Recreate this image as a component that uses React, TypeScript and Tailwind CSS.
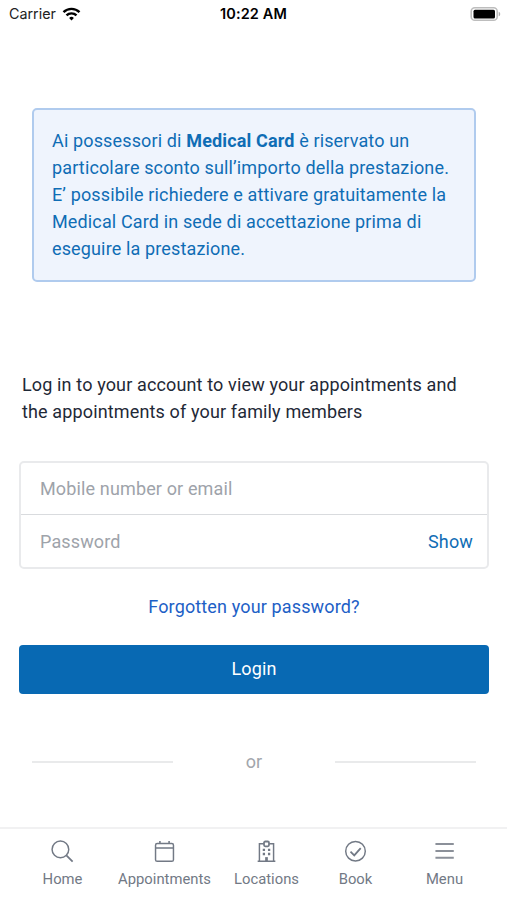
import React from 'react';

interface NavItem {
  label: string;
  width: string;
  icon: React.ReactNode;
}

const navItems: NavItem[] = [
  {
    label: 'Home',
    width: 'w-[89px]',
    icon: (
      <>
        <circle cx="10" cy="10" r="8" />
        <path d="M15.7 15.7l6 6" strokeWidth="1.7" />
      </>
    ),
  },
  {
    label: 'Appointments',
    width: 'w-[115px]',
    icon: (
      <>
        <rect x="3.4" y="4.4" width="17.2" height="17" rx="1.6" />
        <path d="M3.4 8.7h17.2M7.6 2v2.2M16.4 2v2.2" strokeWidth="1.5" />
      </>
    ),
  },
  {
    label: 'Locations',
    width: 'w-[89px]',
    icon: (
      <>
        <path d="M3.5 21.3h17M5.2 21.3V4.6h4.2M14.6 4.6h4.2v16.7" />
        <rect x="9.6" y="2.4" width="4.8" height="4.6" rx="1.2" strokeWidth="1.7" />
        <path d="M12 17.4v3.9" strokeWidth="2.6" />
        <path d="M8.4 10.4h2.2M13.4 10.4h2.2M8.4 14.4h2.2M13.4 14.4h2.2" strokeWidth="2.2" />
      </>
    ),
  },
  {
    label: 'Book',
    width: 'w-[89px]',
    icon: (
      <>
        <circle cx="12" cy="11.7" r="9.4" />
        <path d="M7.2 12.2l3.6 3.5 6.2-7" strokeWidth="1.7" />
      </>
    ),
  },
  {
    label: 'Menu',
    width: 'w-[89px]',
    icon: <path d="M3.3 4.8h17.6M3.3 11.5h17.6M3.3 17.9h17.6" stroke="#8b9099" strokeWidth="1.9" />,
  },
];

const StatusBar = () => (
  <header className="grid h-[27px] shrink-0 grid-cols-3 items-center px-[8px] pb-px font-['Inter',sans-serif] text-[14px] text-black">
    <div className="flex items-center gap-[6px] pl-px">
      <span className="text-[14.3px] text-[#222222]">Carrier</span>
      <svg width="19" height="14" viewBox="0 0 18 14" fill="none" stroke="black" strokeWidth="2.4">
        <path d="M1 5.1a11.5 11.5 0 0 1 16 0" />
        <path d="M4 8.4a7.1 7.1 0 0 1 10 0" />
        <path d="M6.6 10.9a3.5 3.5 0 0 1 4.8 0L9 13.4z" fill="black" stroke="none" />
      </svg>
    </div>
    <span className="text-center text-[14.5px] font-semibold tracking-[0.1px]">10:22 AM</span>
    <svg className="-mr-[2px] justify-self-end" width="31" height="16" viewBox="0 0 31 16">
      <rect x="1.2" y="1.7" width="26" height="12.6" rx="3.6" fill="white" stroke="#bdbdbd" strokeWidth="1.6" />
      <rect x="3.5" y="3.8" width="21.5" height="8.6" rx="1.5" fill="black" />
      <path d="M28.7 5.7c2 .7 2 3.9 0 4.6z" fill="#adadad" />
    </svg>
  </header>
);

const LoginForm = () => (
  <form className="ml-[19px] mr-[18px] mt-9 flex flex-col" onSubmit={(e) => e.preventDefault()}>
    <div className="h-[108px] rounded-[5px] border-2 border-[#e9eaec]">
      <div className="flex h-[52px] items-center border-b border-[#d9dbde] px-[19px]">
        <input
          type="text"
          placeholder="Mobile number or email"
          className="w-full tracking-[0.14px] outline-none placeholder:text-[#9ea3aa]"
        />
      </div>
      <div className="flex h-[52px] items-center pl-[19px] pr-[14px]">
        <input
          type="password"
          placeholder="Password"
          className="min-w-0 flex-1 tracking-[0.14px] outline-none placeholder:text-[#9ea3aa]"
        />
        <button type="button" className="tracking-[0.14px] text-[#0f6db5]">Show</button>
      </div>
    </div>
    <a href="#" className="mt-[24px] self-center text-[#1d60c6]">Forgotten your password?</a>
    <button type="submit" className="mt-[25px] h-[49px] rounded-[4px] bg-[#0869b3] pb-[2px] tracking-[0.14px] text-white">
      Login
    </button>
  </form>
);

const BottomNav = () => (
  <nav className="flex h-[73px] shrink-0 justify-center border-t-2 border-[#f1f1f2] bg-white pt-[10px] text-[#727985]">
    {navItems.map((item) => (
      <a key={item.label} href="#" className={`flex flex-col items-center ${item.width}`}>
        <svg width="25" height="25" viewBox="0 0 24 24" fill="none" stroke="currentColor" strokeWidth="1.4">
          {item.icon}
        </svg>
        <span className="mt-[5px] text-[14.8px] leading-[20px] tracking-normal">{item.label}</span>
      </a>
    ))}
  </nav>
);

export default function App() {
  return (
    <div className="flex h-[900px] w-[507px] flex-col overflow-hidden bg-white font-['Roboto',sans-serif] text-[18px] leading-[27px]">
      <StatusBar />
      <main className="flex flex-1 flex-col tracking-[0.14px]">
        <section className="ml-8 mr-[31px] mt-[81px] h-[174px] rounded-[5px] border-2 border-[#b0cbee] bg-[#eff4fd] pl-[18px] pt-[17px] text-[#0f6db5]">
          <p>
            Ai possessori di <strong className="font-bold">Medical Card</strong> è riservato un
            <br />
            particolare sconto sull’importo della prestazione.
            <br />
            E’ possibile richiedere e attivare gratuitamente la
            <br />
            Medical Card in sede di accettazione prima di
            <br />
            eseguire la prestazione.
          </p>
        </section>
        <p className="mx-[22px] mt-[89px] text-[#1f2937]">
          Log in to your account to view your appointments and
          <br />
          the appointments of your family members
        </p>
        <LoginForm />
        <div className="ml-8 mr-[31px] mt-[54px] flex items-center justify-between text-[#a2a6ac]">
          <div className="h-[2px] w-[141px] bg-[#e9eaeb]" />
          <span>or</span>
          <div className="h-[2px] w-[141px] bg-[#e9eaeb]" />
        </div>
      </main>
      <BottomNav />
    </div>
  );
}
